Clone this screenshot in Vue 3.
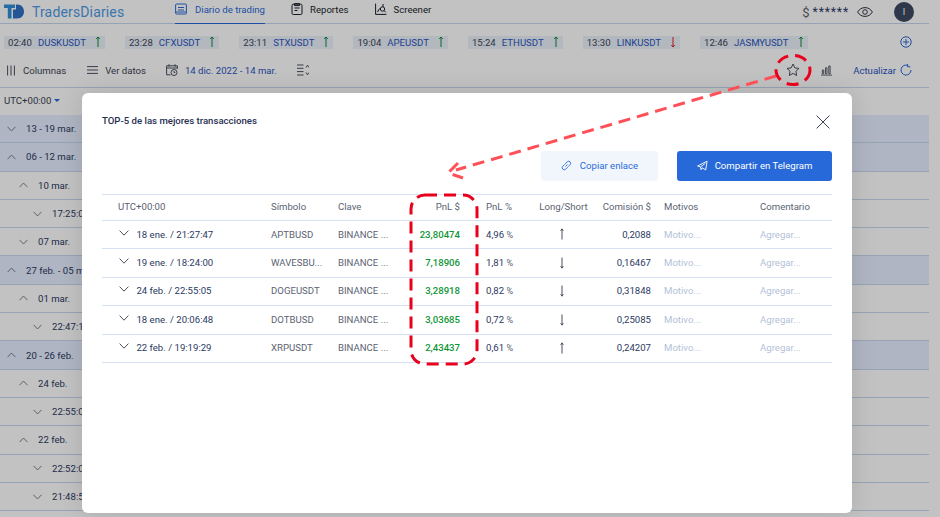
<template>
  <div class="page">
    <header class="topbar">
      <div class="logo">
        <svg class="logo-mark" viewBox="0 0 20 15" width="20" height="15">
          <path d="M0 .5h11v3.500H7.500v10.500H3.800V4H0z" fill="#2f8fd8" />
          <path d="M9 5.500h3V.5h1c4.300 0 7 2.800 7 7s-2.700 7-7 7H9z" fill="#2f6fc4" />
        </svg>
        <span class="logo-text">TradersDiaries</span>
      </div>
      <nav class="nav">
        <a class="nav-item active">
          <svg viewBox="0 0 12 12" width="12" height="12" class="nav-icon">
            <rect x="0.6" y="1" width="10.800" height="10" rx="1" />
            <path d="M3 4.500h6M3 7h6M1 9h10" />
          </svg>
          Diario de trading
        </a>
        <a class="nav-item">
          <svg viewBox="0 0 12 12" width="12" height="12" class="nav-icon">
            <rect x="1" y="1.200" width="10" height="10.300" rx="1.200" />
            <path d="M3.500 .6h5v2h-5zM3.500 5h5M3.500 7.500h3" />
          </svg>
          Reportes
        </a>
        <a class="nav-item">
          <svg viewBox="0 0 12 12" width="12" height="12" class="nav-icon">
            <path d="M.6 .6v10.800h10.800M2.500 9l2-3.500" />
            <circle cx="7.500" cy="6" r="2.200" />
            <path d="M9 7.500l1.800 1.800M8 1v3" />
          </svg>
          Screener
        </a>
      </nav>
      <div class="balance">
        <span class="dollar">$</span>
        <span class="stars">******</span>
        <svg class="eye" viewBox="0 0 16 10" width="16" height="10">
          <path d="M.6 5C2.500 2 5 .6 8 .6S13.500 2 15.400 5C13.500 8 11 9.400 8 9.400S2.500 8 .6 5z" />
          <circle cx="8" cy="5" r="2.300" />
        </svg>
        <span class="avatar">I</span>
      </div>
    </header>

    <section class="ticker">
      <div v-for="t in tickers" :key="t.symbol" class="chip">
        <span class="chip-time">{{ t.time }}</span>
        <span class="chip-symbol">{{ t.symbol }}</span>
        <svg viewBox="0 0 6 12" width="6" height="12" :class="t.up ? 'arrow-up' : 'arrow-down'">
          <path d="M3 1v10M1.300 3L3 1l1.700 2" />
        </svg>
      </div>
      <svg class="plus" viewBox="0 0 12 12" width="12" height="12">
        <circle cx="6" cy="6" r="5.200" />
        <path d="M6 3v6M3 6h6" />
      </svg>
    </section>

    <section class="toolbar">
      <div class="tool tool-columns">
        <svg viewBox="0 0 8 10" width="8" height="11" class="tool-icon"><path d="M.6 0v10M4 0v10M7.400 0v10" /></svg>
        Columnas
      </div>
      <div class="tool tool-view">
        <svg viewBox="0 0 11 8" width="11" height="8" class="tool-icon"><path d="M0 .6h11M0 4h11M0 7.400h11" /></svg>
        Ver datos
      </div>
      <div class="tool tool-date">
        <svg viewBox="0 0 12 12" width="12" height="12" class="tool-icon">
          <path d="M4.500 10.800H.6V1.800h10.800v3M3 .2v2.500M9 .2v2.500M.6 4h10.800" />
          <circle cx="8" cy="8.500" r="3" />
          <path d="M8 7v1.500h1.300" />
        </svg>
        <span class="date-text">14 dic. 2022 - 14 mar.</span>
      </div>
      <svg class="tool-icon tool-sort" viewBox="0 0 12 12" width="12" height="12">
        <path d="M0 1h6.500M0 4.300h6.500M0 7.600h6.500M0 11h6.500M9 3.500l1.500-2.300L12 3.500M9 8.500l1.500 2.300L12 8.500" />
      </svg>
      <div class="toolbar-right">
        <svg class="tool-icon star" viewBox="0 0 14 14" width="14" height="14">
          <path d="M7 1l1.800 3.900 4.200.5-3.100 2.900.8 4.200L7 10.400l-3.700 2.100.8-4.200L1 5.400l4.200-.5z" />
        </svg>
        <svg class="tool-icon bars" viewBox="0 0 12 11" width="12" height="11">
          <path d="M0 10.500h12M1.500 9V5h1.500v4zM5 9V2.500h1.500V9zM8.500 9V.6H10V9z" />
        </svg>
        <span class="refresh-text">Actualizar</span>
        <svg class="refresh" viewBox="0 0 12 12" width="12" height="12">
          <path d="M7.800 1.400A5 5 0 1 0 11 6M7.600 0v2.800h2.800" />
        </svg>
      </div>
    </section>

    <div class="tz">UTC+00:00 <span class="caret"></span></div>

    <div class="rows">
      <div
        v-for="row in rows"
        :key="row.label"
        class="row"
        :class="[`level-${row.level}`, { group: row.level === 0 }]"
      >
        <svg class="chevron" viewBox="0 0 10 6" width="9" height="6">
          <path :d="row.open ? 'M.6 5.400L5 .8l4.400 4.600' : 'M.6 .6L5 5.200 9.400 .6'" />
        </svg>
        <span>{{ row.label }}</span>
      </div>
    </div>

    <div class="scrim"></div>

    <div class="modal">
      <div class="modal-head">
        <h2 class="modal-title">TOP-5 de las mejores transacciones</h2>
        <svg class="close" viewBox="0 0 14 14" width="14" height="14"><path d="M.6 .6l12.800 12.800M13.400 .6L.6 13.400" /></svg>
      </div>
      <div class="modal-actions">
        <button class="btn btn-light">
          <svg viewBox="0 0 12 12" width="11" height="11" class="btn-icon">
            <path d="M5 7l2-2M4.600 4.200L6.800 2a2.100 2.100 0 0 1 3.100 3.100L7.700 7.300M7.300 7.800L5.100 10A2.100 2.100 0 0 1 2 6.900l2.200-2.200" />
          </svg>
          Copiar enlace
        </button>
        <button class="btn btn-primary">
          <svg viewBox="0 0 12 12" width="11" height="11" class="btn-icon">
            <path d="M.6 6.500L11 1.300 9.500 10.800 5.500 8.500 4.500 10.500 3.800 7.500zM3.800 7.500L9 3.800" />
          </svg>
          Compartir en Telegram
        </button>
      </div>
      <table class="trades">
        <colgroup>
          <col style="width: 169px" />
          <col style="width: 67px" />
          <col style="width: 72px" />
          <col style="width: 50px" />
          <col style="width: 75px" />
          <col style="width: 57px" />
          <col style="width: 59px" />
          <col style="width: 109px" />
          <col />
        </colgroup>
        <thead>
          <tr>
            <th class="col-time">UTC+00:00</th>
            <th>Símbolo</th>
            <th>Clave</th>
            <th class="num">PnL $</th>
            <th class="col-pct">PnL %</th>
            <th class="center">Long/Short</th>
            <th class="num">Comisión $</th>
            <th class="col-reason">Motivos</th>
            <th>Comentario</th>
          </tr>
        </thead>
        <tbody>
          <tr v-for="t in trades" :key="t.symbol">
            <td class="col-date">
              <svg class="row-chevron" viewBox="0 0 10 6" width="10" height="6"><path d="M.6 .6L5 5.200 9.400 .6" /></svg>
              {{ t.date }}
            </td>
            <td class="muted">{{ t.symbol }}</td>
            <td class="muted">BINANCE ...</td>
            <td class="num pnl">{{ t.pnl }}</td>
            <td class="col-pct">{{ t.pct }} <span class="pct-sign">%</span></td>
            <td class="center">
              <svg viewBox="0 0 6 12" width="6" height="12" class="side" :class="{ flip: !t.long }">
                <path d="M3 1v10.500M1.700 2.800L3 .8l1.300 2" />
              </svg>
            </td>
            <td class="num">{{ t.fee }}</td>
            <td class="col-reason faint">Motivo...</td>
            <td class="faint">Agregar...</td>
          </tr>
        </tbody>
      </table>
    </div>

    <!-- red marks drawn on top of the screenshot -->
    <svg class="marks" viewBox="0 0 940 517" width="940" height="517">
      <path class="mark-line" d="M776 76L456 170" />
      <path class="mark-line" d="M458 163L448 173L463 178" />
      <ellipse class="mark-strong" cx="793" cy="70" rx="17" ry="14.500" />
      <rect class="mark-strong" x="411" y="195" width="66" height="169" rx="14" />
    </svg>
  </div>
</template>

<script setup>
const tickers = [
  { time: "02:40", symbol: "DUSKUSDT", up: true },
  { time: "23:28", symbol: "CFXUSDT", up: true },
  { time: "23:11", symbol: "STXUSDT", up: true },
  { time: "19:04", symbol: "APEUSDT", up: true },
  { time: "15:24", symbol: "ETHUSDT", up: true },
  { time: "13:30", symbol: "LINKUSDT", up: false },
  { time: "12:46", symbol: "JASMYUSDT", up: true },
]

const rows = [
  { label: "13 - 19 mar.", level: 0, open: false },
  { label: "06 - 12 mar.", level: 0, open: true },
  { label: "10 mar.", level: 1, open: true },
  { label: "17:25:07", level: 2, open: false },
  { label: "07 mar.", level: 1, open: false },
  { label: "27 feb. - 05 mar.", level: 0, open: true },
  { label: "01 mar.", level: 1, open: true },
  { label: "22:47:13", level: 2, open: false },
  { label: "20 - 26 feb.", level: 0, open: true },
  { label: "24 feb.", level: 1, open: true },
  { label: "22:55:05", level: 2, open: false },
  { label: "22 feb.", level: 1, open: true },
  { label: "22:52:09", level: 2, open: false },
  { label: "21:48:52", level: 2, open: false },
]

const trades = [
  { date: "18 ene. / 21:27:47", symbol: "APTBUSD", pnl: "23,80474", pct: "4,96", long: true, fee: "0,2088" },
  { date: "19 ene. / 18:24:00", symbol: "WAVESBU...", pnl: "7,18906", pct: "1,81", long: false, fee: "0,16467" },
  { date: "24 feb. / 22:55:05", symbol: "DOGEUSDT", pnl: "3,28918", pct: "0,82", long: false, fee: "0,31848" },
  { date: "18 ene. / 20:06:48", symbol: "DOTBUSD", pnl: "3,03685", pct: "0,72", long: false, fee: "0,25085" },
  { date: "22 feb. / 19:19:29", symbol: "XRPUSDT", pnl: "2,43437", pct: "0,61", long: true, fee: "0,24207" },
]
</script>

<style>
html,
body {
  margin: 0;
  overflow: hidden;
}
</style>

<style scoped>
.page {
  position: relative;
  width: 940px;
  height: 517px;
  overflow: hidden;
  background: #fff;
  font-family: Roboto, "Liberation Sans", sans-serif;
  font-size: 9.6px;
  color: #2b3a63;
}

svg {
  fill: none;
  stroke: currentColor;
  stroke-width: 1;
  flex: none;
}

.topbar {
  display: flex;
  align-items: center;
  height: 24px;
  width: 929px;
  padding-left: 4px;
  box-sizing: border-box;
  border-bottom: 1px solid #c6d6ee;
}

.logo {
  display: flex;
  align-items: center;
  width: 171px;
  height: 20px;
}

.logo-mark path {
  stroke: none;
}

.logo-text {
  margin-left: 8px;
  font-size: 14px;
  letter-spacing: 0.15px;
  color: #4d9ae6;
}

.nav {
  display: flex;
  height: 24px;
}

.nav-item {
  display: flex;
  align-items: center;
  gap: 7px;
  height: 23px;
  margin-right: 26px;
  padding-bottom: 4px;
  box-sizing: border-box;
  color: #1a1f2b;
}

.nav-item.active {
  gap: 8px;
  height: 24px;
  color: #2a69d6;
  border-bottom: 1px solid #2a69d6;
}

.balance {
  display: flex;
  align-items: center;
  margin-left: auto;
  margin-right: 15px;
  padding-top: 1px;
}

.dollar {
  font-size: 13px;
  color: #5c6470;
}

.stars {
  margin-left: 3px;
  font-size: 12px;
  letter-spacing: 0.9px;
  color: #2b3a63;
}

.eye {
  margin-left: 8px;
  color: #30343c;
}

.avatar {
  display: flex;
  align-items: center;
  justify-content: center;
  width: 20px;
  height: 20px;
  margin-left: 21px;
  border-radius: 50%;
  background: #3e4a63;
  color: #fff;
  font-size: 9px;
}

.ticker {
  display: flex;
  align-items: center;
  gap: 20px;
  width: 929px;
  height: 35px;
  padding: 1px 17px 0 4px;
  box-sizing: border-box;
}

.chip {
  display: flex;
  align-items: center;
  height: 13px;
  padding: 0 4px 0 4px;
  background: #ebf1fa;
}

.chip-time {
  margin-right: 6px;
  color: #3c4453;
}

.chip-symbol {
  margin-right: 9px;
  color: #2a55c0;
}

.arrow-up {
  color: #0a8a3a;
}

.arrow-down {
  color: #e02020;
  transform: rotate(180deg);
}

.plus {
  margin-left: auto;
  color: #2a69d6;
}

.toolbar {
  display: flex;
  align-items: center;
  width: 929px;
  height: 29px;
  padding: 0 17px 6px 7px;
  box-sizing: border-box;
  border-bottom: 1px solid #c6d6ee;
  color: #3c4453;
}

.tool {
  display: flex;
  align-items: center;
}

.tool-icon {
  color: #4a505c;
}

.tool-columns {
  gap: 8px;
}

.tool-view {
  gap: 7px;
  margin-left: 21px;
}

.tool-date {
  gap: 7px;
  margin-left: 20px;
}

.date-text {
  color: #2a55c0;
}

.tool-sort {
  margin-left: 20px;
}

.toolbar-right {
  display: flex;
  align-items: center;
  margin-left: auto;
}

.bars {
  margin-left: 21px;
  width: 11px;
}

.refresh-text {
  margin-left: 21px;
  color: #2a55c0;
}

.refresh {
  margin-left: 4px;
  color: #2a69d6;
}

.tz {
  display: flex;
  align-items: center;
  gap: 3px;
  height: 27px;
  padding: 0 0 2px 4px;
  box-sizing: border-box;
  color: #3c4453;
}

.caret {
  width: 0;
  height: 0;
  border-left: 3px solid transparent;
  border-right: 3px solid transparent;
  border-top: 3px solid #2a69d6;
}

.rows {
  width: 929px;
}

.row {
  display: flex;
  align-items: center;
  gap: 10px;
  height: 28.3px;
  box-sizing: border-box;
  padding-left: 7px;
  white-space: nowrap;
  border-bottom: 1px solid #c6d6ee;
  background: #fff;
  color: #2b3a63;
}

.row.group {
  background: #e6eeff;
}

.level-1 {
  padding-left: 19px;
}

.level-2 {
  padding-left: 33px;
}

.chevron {
  color: #6a7180;
}

.scrim {
  position: absolute;
  inset: 0;
  background: rgba(0, 0, 0, 0.24);
}

.modal {
  position: absolute;
  top: 93px;
  left: 82px;
  width: 770px;
  height: 420px;
  padding: 0 20px;
  box-sizing: border-box;
  border-radius: 6px;
  background: #fff;
  box-shadow: 0 0 24px rgba(0, 0, 0, 0.12);
}

.modal-head {
  display: flex;
  align-items: center;
  justify-content: space-between;
  height: 58px;
}

.modal-title {
  margin: 0 0 3px;
  font-size: 9.6px;
  font-weight: 500;
  color: #1f2f52;
}

.close {
  margin: 0 2px 1px 0;
  color: #3c4453;
}

.modal-actions {
  display: flex;
  justify-content: flex-end;
  gap: 19px;
}

.btn {
  display: flex;
  align-items: center;
  justify-content: center;
  gap: 7px;
  height: 30px;
  padding: 0 0 2px;
  border: none;
  border-radius: 3px;
  font-family: inherit;
  font-size: 9.6px;
  font-weight: 400;
}

.btn-light {
  width: 117px;
  gap: 8px;
  background: #f1f6fd;
  color: #2a6bd8;
}

.btn-primary {
  width: 155px;
  background: #2769d9;
  color: #fff;
}

.trades {
  width: 730px;
  margin-top: 13px;
  table-layout: fixed;
  border-collapse: collapse;
  border-top: 1px solid #d5e1f3;
}

.trades th {
  height: 23px;
  padding: 0 0 2px;
  font-weight: 400;
  text-align: left;
  color: #5b6373;
  border-bottom: 1px solid #d5e1f3;
}

.trades td {
  height: 26.4px;
  padding: 0 0 1px;
  white-space: nowrap;
  overflow: hidden;
  color: #2b3a63;
  border-bottom: 1px solid #d5e1f3;
}

.trades .num {
  text-align: right;
}

.trades .center {
  text-align: center;
}

.trades .col-time {
  padding-left: 16px;
}

.trades .col-date {
  padding-left: 17px;
}

.row-chevron {
  margin-right: 5px;
  vertical-align: 2px;
  color: #4a505c;
}

.trades .muted {
  color: #5b6373;
}

.trades .pnl {
  font-weight: 500;
  color: #0f9636;
}

.trades .col-pct {
  padding-left: 26px;
}

.pct-sign {
  color: #5b6373;
  font-size: 9px;
}

.side {
  margin-right: 4px;
  vertical-align: middle;
  color: #4a505c;
}

.side.flip {
  transform: rotate(180deg);
}

.trades .col-reason {
  padding-left: 13px;
}

.trades .faint {
  color: #b3c1d8;
}

.marks {
  position: absolute;
  top: 0;
  left: 0;
  stroke-width: 3;
  pointer-events: none;
}

.mark-line {
  stroke: #ff5058;
  stroke-dasharray: 12 7;
}

.mark-strong {
  stroke: #e8001c;
  stroke-dasharray: 12 7;
}
</style>
